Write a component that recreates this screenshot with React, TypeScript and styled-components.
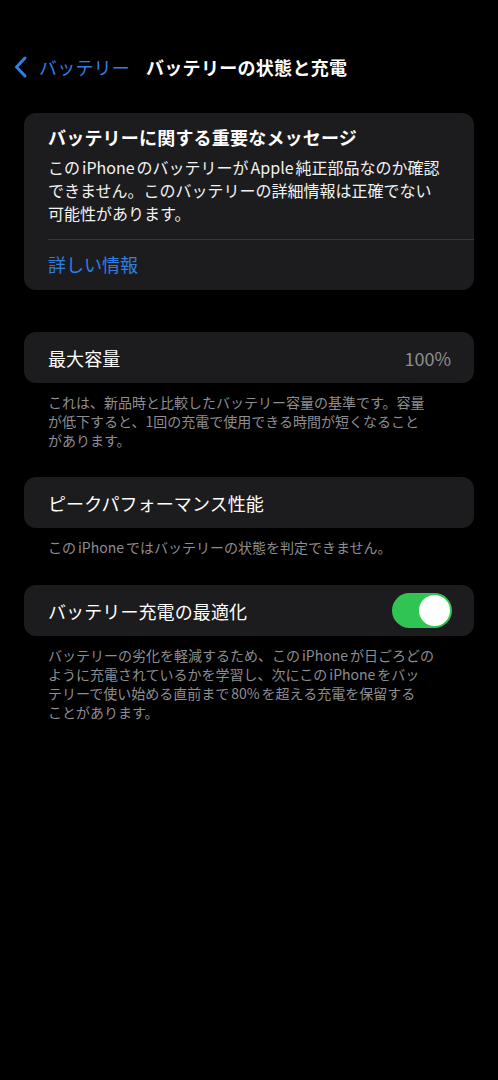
import styled, { createGlobalStyle } from 'styled-components';

const GlobalStyle = createGlobalStyle`
  html, body {
    margin: 0;
    padding: 0;
    background: #000;
  }
  body {
    font-family: "Noto Sans CJK JP", "Noto Sans", Inter, sans-serif;
    -webkit-font-smoothing: antialiased;
  }
`;

const App = () => {
  return (
    <Page>
      <GlobalStyle />
      <NavBar>
        <BackLink>
          <svg width="16" height="24" viewBox="0 0 16 24">
            <path d="M12 3 L3.5 12 L12 21" fill="none" stroke="#2f80e2" strokeWidth="3" strokeLinecap="round" strokeLinejoin="round" />
          </svg>
          <BackText>バッテリー</BackText>
        </BackLink>
        <NavTitle>バッテリーの状態と充電</NavTitle>
      </NavBar>

      <Content>
        <Card>
          <MessageBody>
            <MessageTitle>バッテリーに関する重要なメッセージ</MessageTitle>
            <MessageText>
              この<Latin>iPhone</Latin>のバッテリーが<Latin>Apple</Latin>純正部品なのか確認
              <br />
              できません。このバッテリーの詳細情報は正確でない
              <br />
              可能性があります。
            </MessageText>
          </MessageBody>
          <Divider />
          <LinkRow>詳しい情報</LinkRow>
        </Card>

        <Section $top={42}>
          <Card>
            <Row>
              <RowLabel>最大容量</RowLabel>
              <RowValue>100%</RowValue>
            </Row>
          </Card>
          <Footer>
            これは、新品時と比較したバッテリー容量の基準です。容量
            <br />
            が低下すると、1回の充電で使用できる時間が短くなること
            <br />
            があります。
          </Footer>
        </Section>

        <Section $top={27}>
          <Card>
            <Row>
              <RowLabel>ピークパフォーマンス性能</RowLabel>
            </Row>
          </Card>
          <Footer>
            この<Latin>iPhone</Latin>ではバッテリーの状態を判定できません。
          </Footer>
        </Section>

        <Section $top={28}>
          <Card>
            <Row>
              <RowLabel>バッテリー充電の最適化</RowLabel>
              <Toggle $on>
                <Knob />
              </Toggle>
            </Row>
          </Card>
          <Footer>
            バッテリーの劣化を軽減するため、この<Latin>iPhone</Latin>が日ごろどの
            <br />
            ように充電されているかを学習し、次にこの<Latin>iPhone</Latin>をバッ
            <br />
            テリーで使い始める直前まで<Latin>80%</Latin>を超える充電を保留する
            <br />
            ことがあります。
          </Footer>
        </Section>
      </Content>
    </Page>
  );
};

const Page = styled.div`
  min-height: 1080px;
  background: #000;
  color: #fff;
`;

const NavBar = styled.div`
  display: flex;
  align-items: center;
  height: 30px;
  padding: 52px 0 0 13px;
`;

const BackLink = styled.div`
  display: flex;
  align-items: center;
  gap: 10px;
  margin-right: 16px;
`;

const BackText = styled.span`
  color: #2f80e2;
  font-size: 18px;
  letter-spacing: 0.2px;
`;

const NavTitle = styled.span`
  font-size: 18px;
  font-weight: 700;
  letter-spacing: 0.3px;
`;

const Content = styled.div`
  padding: 31px 24px 0;
`;

const Section = styled.div<{ $top: number }>`
  margin-top: ${(p) => p.$top}px;
`;

const Card = styled.div`
  background: #1c1c1e;
  border-radius: 12px;
  overflow: hidden;
`;

const Latin = styled.span`
  margin: 0 2px;
`;

const MessageBody = styled.div`
  padding: 11px 20px 14px 24px;
`;

const MessageTitle = styled.div`
  font-size: 18px;
  font-weight: 700;
  line-height: 26px;
  margin-bottom: 6px;
  letter-spacing: 0.2px;
`;

const MessageText = styled.div`
  font-size: 16px;
  line-height: 23px;
  color: #f2f2f2;
  white-space: nowrap;
`;

const Divider = styled.div`
  height: 1px;
  background: #38383a;
  margin-left: 24px;
`;

const LinkRow = styled.div`
  color: #2f80e2;
  font-size: 18px;
  padding: 12px 24px 13px;
  line-height: 25px;
`;

const Row = styled.div`
  display: flex;
  align-items: center;
  justify-content: space-between;
  height: 51px;
  padding: 0 23px 0 24px;
`;

const RowLabel = styled.span`
  font-size: 18px;
  letter-spacing: 0.1px;
`;

const RowValue = styled.span`
  font-size: 18px;
  color: #8e8e93;
`;

const Toggle = styled.div<{ $on?: boolean }>`
  width: 60px;
  height: 35px;
  border-radius: 18px;
  background: ${(p) => (p.$on ? '#30c552' : '#39393d')};
  display: flex;
  align-items: center;
  justify-content: ${(p) => (p.$on ? 'flex-end' : 'flex-start')};
  padding: 2px;
  box-sizing: border-box;
  margin-right: -1px;
`;

const Knob = styled.div`
  width: 31px;
  height: 31px;
  border-radius: 50%;
  background: #fff;
`;

const Footer = styled.div`
  font-size: 14px;
  line-height: 19px;
  color: #8d8d92;
  padding: 10px 24px 0 24px;
  white-space: nowrap;
`;

export default App;
